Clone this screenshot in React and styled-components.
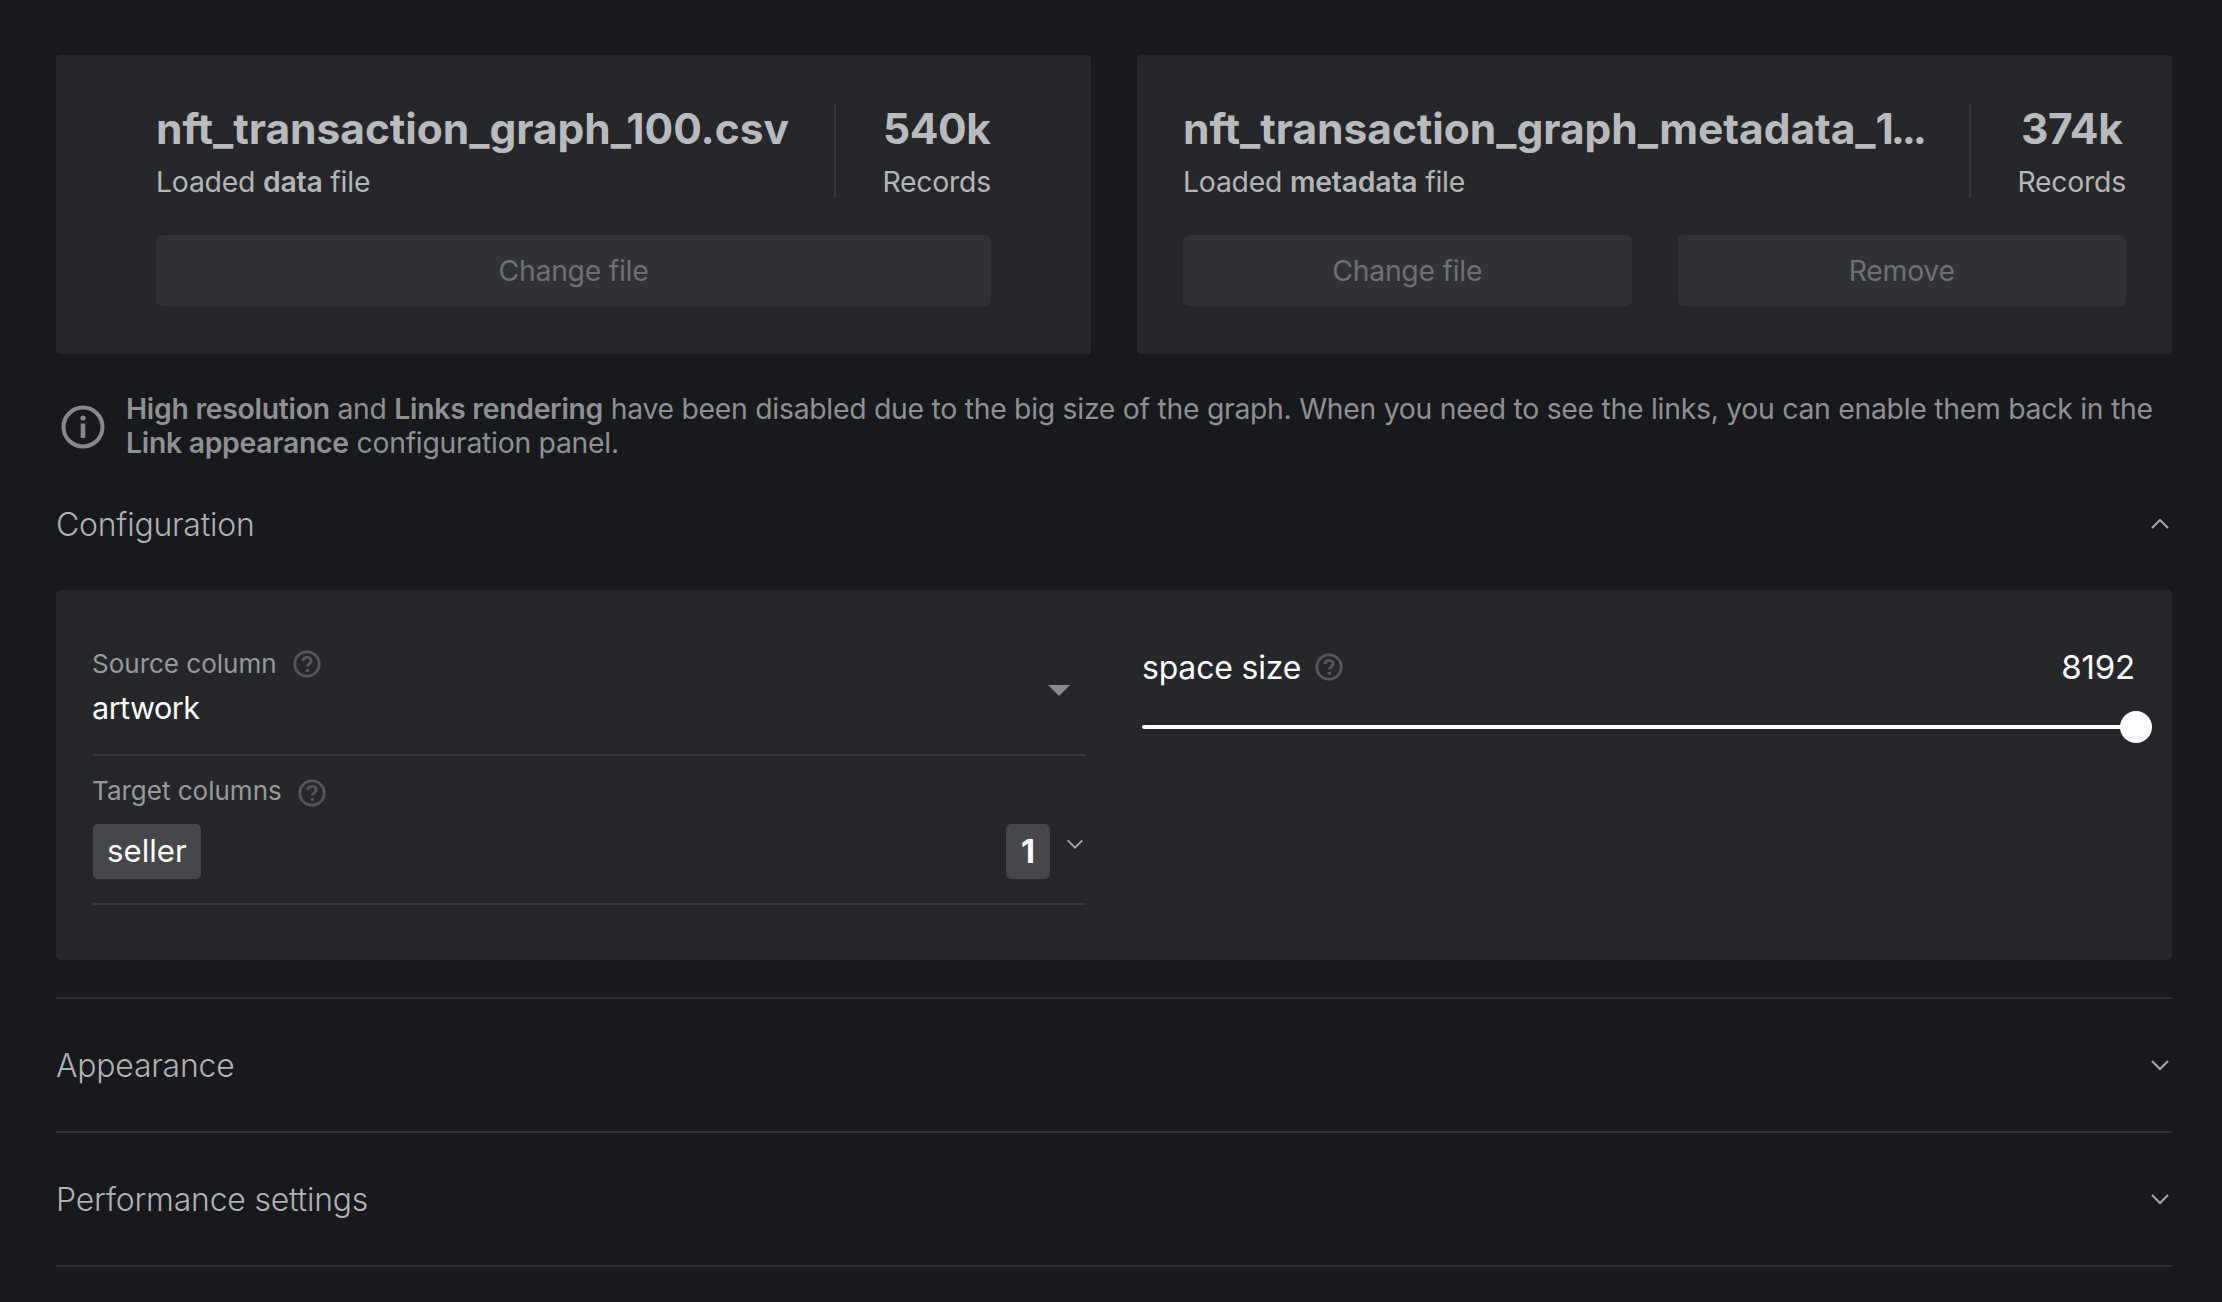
import React from 'react';
import styled, { createGlobalStyle } from 'styled-components';

const Global = createGlobalStyle`
  html, body { margin: 0; padding: 0; background: #18191c; }
  * { box-sizing: border-box; }
  body { font-family: Inter, "Liberation Sans", sans-serif; color: #b4b5b6; }
`;

const Page = styled.div`
  width: 2222px;
  height: 1302px;
  overflow: hidden;
  padding: 55px 50px 0 56px;
  background: #18191c;
`;

const Cards = styled.div`
  display: grid;
  grid-template-columns: 1fr 1fr;
  gap: 46px;
`;

const Card = styled.section`
  height: 299px;
  min-width: 0;
  background: #26272b;
  border-radius: 4px;
  padding: 49px ${p => p.$inset}px 48px;
  display: flex;
  flex-direction: column;
  gap: 37px;
`;

const FileRow = styled.div`
  display: flex;
  height: 94px;
  min-width: 0;
`;

const FileInfo = styled.div`
  flex: 1;
  min-width: 0;
  padding-right: 28px;
`;

const Title = styled.div`
  font-size: 42.5px;
  line-height: 50px;
  font-weight: 700;
  letter-spacing: ${p => p.$tight ? -0.05 : -0.4}px;
  color: #b9babb;
  white-space: nowrap;
  overflow: hidden;
`;

const TitleTail = styled.span`
  letter-spacing: -3.2px;
`;

const Sub = styled.div`
  font-size: 28.33px;
  line-height: 34px;
  margin-top: 11px;
  letter-spacing: -0.2px;
  color: #b4b5b6;
  white-space: nowrap;
  b { font-weight: 600; }
`;

const Stat = styled.div`
  flex: none;
  border-left: 2px solid #37383c;
  padding-left: 46px;
  text-align: center;
`;

const Actions = styled.div`
  display: flex;
  gap: 46px;
`;

const GhostButton = styled.button`
  flex: 1;
  height: 71px;
  border: 0;
  border-radius: 6px;
  background: #313236;
  color: #6f7072;
  font: 400 28.33px Inter, "Liberation Sans", sans-serif;
  letter-spacing: -0.25px;
`;

const Notice = styled.div`
  display: flex;
  align-items: center;
  margin-top: 38px;
  padding-left: 5px;
  gap: 21px;
  color: #8f9092;
  font-size: 28.33px;
  line-height: 34px;
  letter-spacing: -0.265px;
  b { font-weight: 600; }
  svg { flex: none; margin-top: 2px; }
`;

const SectionHead = styled.div`
  display: flex;
  align-items: center;
  justify-content: space-between;
  height: ${p => p.$h}px;
  margin-bottom: ${p => p.$after || 0}px;
  font-size: 31.9px;
  font-weight: 300;
  letter-spacing: -0.18px;
  color: #b0b1b3;
  svg { margin-right: 1px; }
`;

const Panel = styled.div`
  height: 370px;
  background: #26272b;
  border-radius: 5px;
  padding: 0 20px 0 37px;
  display: grid;
  grid-template-columns: 993px 1fr;
  gap: 56px;
`;

const LeftCol = styled.div`
  min-width: 0;
`;

const SourceField = styled.div`
  position: relative;
  height: 166px;
  padding-top: 57px;
  border-bottom: 2px solid #38393d;
`;

const TargetField = styled.div`
  height: 149px;
  padding-top: 18px;
  border-bottom: 2px solid #38393d;
`;

const FieldLabel = styled.div`
  display: flex;
  align-items: center;
  gap: 16px;
  font-size: 26px;
  line-height: 34px;
  color: #98999b;
  margin-left: -1px;
  svg { position: relative; top: ${p => p.$iconTop || 0}px; }
`;

const FieldValue = styled.div`
  font-size: 30.6px;
  line-height: 40px;
  margin-top: 7px;
  margin-left: -1px;
  letter-spacing: -0.55px;
  color: #fff;
`;

const Caret = styled.div`
  position: absolute;
  right: 16px;
  top: 95px;
  width: 0;
  height: 0;
  border-left: 11px solid transparent;
  border-right: 11px solid transparent;
  border-top: 11px solid #8a8b8d;
`;

const TagRow = styled.div`
  display: flex;
  align-items: flex-start;
  justify-content: space-between;
  margin-top: 16px;
`;

const Tag = styled.div`
  height: 55px;
  min-width: ${p => p.$square ? 44 : 0}px;
  text-align: center;
  padding: 0 14px;
  border-radius: 5px;
  background: #46474b;
  color: #fff;
  font-size: ${p => p.$square ? 32.5 : 31.2}px;
  line-height: 55px;
  font-weight: ${p => p.$square ? 700 : 400};
`;

const TagEnd = styled.div`
  display: flex;
  align-items: flex-start;
  gap: 15px;
  padding-right: 1px;
  svg { margin-top: 10px; }
`;

const SliderCol = styled.div`
  padding-top: 57px;
`;

const SliderHead = styled.div`
  display: flex;
  align-items: center;
  height: 40px;
  color: #fff;
  font-size: 31.9px;
  letter-spacing: -0.15px;
  gap: 14px;
  padding-right: 17px;
`;

const SliderValue = styled.span`
  margin-left: auto;
  font-size: 33px;
`;

const Track = styled.div`
  position: relative;
  height: 4px;
  margin-top: 38px;
  margin-right: 16px;
  border-radius: 2px;
  background: #fff;
`;

const Thumb = styled.div`
  position: absolute;
  right: -16px;
  top: -14px;
  width: 32px;
  height: 32px;
  border-radius: 50%;
  background: #fff;
`;

const Rule = styled.div`
  height: 2px;
  background: #2f3034;
  margin-top: ${p => p.$top || 0}px;
`;

const Chevron = ({ up, size = 22, color = '#a8a9ab' }) => (
  <svg width={size} height={size} viewBox="0 0 22 22" fill="none">
    <path d={up ? 'M3 15 L11 7 L19 15' : 'M3 7 L11 15 L19 7'} stroke={color} strokeWidth="2" />
  </svg>
);

const Help = ({ size = 28 }) => (
  <svg width={size} height={size} viewBox="0 0 28 28" fill="none">
    <circle cx="14" cy="14" r="12.2" stroke="#55565a" strokeWidth="2.8" />
    <path d="M9.8 11c.4-2.4 2.2-3.6 4.3-3.6 2.4 0 4.1 1.5 4.1 3.4 0 3-3.9 3-3.9 5.8" stroke="#55565a" strokeWidth="2.9" />
    <circle cx="14.3" cy="20.6" r="1.8" fill="#55565a" />
  </svg>
);

const InfoIcon = () => (
  <svg width="44" height="44" viewBox="0 0 44 44" fill="none">
    <circle cx="22" cy="22" r="19.5" stroke="#87888b" strokeWidth="4" />
    <rect x="19.7" y="18.5" width="4.6" height="14.5" fill="#87888b" />
    <circle cx="22" cy="13" r="2.6" fill="#87888b" />
  </svg>
);

export default function App() {
  return (
    <Page>
      <Global />
      <Cards>
        <Card $inset={100}>
          <FileRow>
            <FileInfo>
              <Title $tight>nft_transaction_graph_100.csv</Title>
              <Sub>Loaded <b>data</b> file</Sub>
            </FileInfo>
            <Stat>
              <Title>540k</Title>
              <Sub>Records</Sub>
            </Stat>
          </FileRow>
          <Actions><GhostButton>Change file</GhostButton></Actions>
        </Card>
        <Card $inset={46}>
          <FileRow>
            <FileInfo>
              <Title $tight>nft_transaction_graph_metadata_<TitleTail>1...</TitleTail></Title>
              <Sub>Loaded <b>metadata</b> file</Sub>
            </FileInfo>
            <Stat>
              <Title>374k</Title>
              <Sub>Records</Sub>
            </Stat>
          </FileRow>
          <Actions>
            <GhostButton>Change file</GhostButton>
            <GhostButton>Remove</GhostButton>
          </Actions>
        </Card>
      </Cards>
      <Notice>
        <InfoIcon />
        <div>
          <b>High resolution</b> and <b>Links rendering</b> have been disabled due to the big size of the graph. When you need to see the links, you can enable them back in the <b>Link appearance</b> configuration panel.
        </div>
      </Notice>
      <SectionHead $h={128} $after={2}>
        Configuration
        <Chevron up />
      </SectionHead>
      <Panel>
        <LeftCol>
          <SourceField>
            <FieldLabel>Source column <Help /></FieldLabel>
            <FieldValue>artwork</FieldValue>
            <Caret />
          </SourceField>
          <TargetField>
            <FieldLabel $iconTop={2}>Target columns <Help /></FieldLabel>
            <TagRow>
              <Tag>seller</Tag>
              <TagEnd>
                <Tag $square>1</Tag>
                <Chevron size={20} />
              </TagEnd>
            </TagRow>
          </TargetField>
        </LeftCol>
        <SliderCol>
          <SliderHead>
            space size <Help />
            <SliderValue>8192</SliderValue>
          </SliderHead>
          <Track><Thumb /></Track>
        </SliderCol>
      </Panel>
      <Rule $top={37} />
      <SectionHead $h={132}>
        Appearance
        <Chevron />
      </SectionHead>
      <Rule />
      <SectionHead $h={132}>
        Performance settings
        <Chevron />
      </SectionHead>
      <Rule />
    </Page>
  );
}
